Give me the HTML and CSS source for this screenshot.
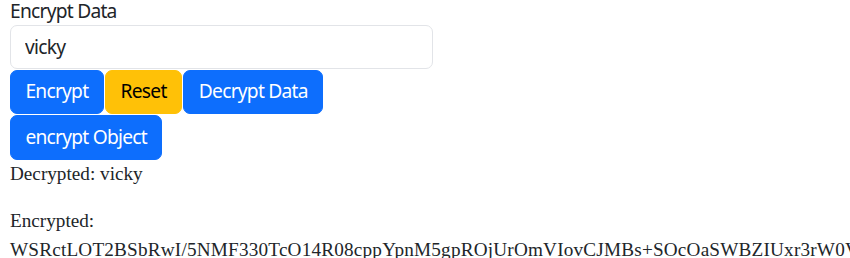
FILE: index.html
```html
<!DOCTYPE html>
<html lang="en">
<head>
<meta charset="utf-8">
<title>Encrypt Data</title>
<link rel="stylesheet" href="styles.css">
</head>
<body>
<div class="page">
  <form class="form">
    <label class="form-label" for="data">Encrypt Data</label>
    <input class="form-control" id="data" type="text" value="vicky">
    <div class="actions">
      <button type="button" class="btn btn-primary">Encrypt</button><button type="button" class="btn btn-warning">Reset</button><button type="button" class="btn btn-primary">Decrypt Data</button><button type="button" class="btn btn-primary">encrypt Object</button>
    </div>
  </form>
  <div class="result">Decrypted: vicky</div>
  <p class="result encrypted">Encrypted: <span class="cipher">WSRctLOT2BSbRwI/5NMF330TcO14R08cppYpnM5gpROjUrOmVIovCJMBs+SOcOaSWBZIUxr3rW0Vk</span></p>
</div>
</body>
</html>
```
FILE: styles.css
```css
html, body {
  margin: 0;
  padding: 0;
  overflow: hidden;
  background: #fff;
}

.page {
  padding: 0 10px;
  font-family: "Liberation Serif", "Times New Roman", serif;
  font-size: 19.2px;
  line-height: 28.8px;
  color: #212529;
}

.form {
  width: 423px;
  font-family: "Noto Sans", "Open Sans", sans-serif;
  letter-spacing: -0.75px;
}

.form-label {
  display: block;
  font-size: 19.2px;
  line-height: 22px;
  height: 24.5px;
  color: #212529;
}

.form-control {
  display: block;
  box-sizing: border-box;
  width: 423px;
  height: 44px;
  margin: 0;
  padding: 0 14px;
  font-family: inherit;
  font-size: 19.2px;
  letter-spacing: inherit;
  color: #212529;
  background: #fff;
  border: 1px solid #e2e4e8;
  border-radius: 7px;
  outline: none;
}

.actions {
  display: flex;
  flex-wrap: wrap;
  column-gap: 1.5px;
  row-gap: 1px;
  margin-top: 1px;
}

.btn {
  box-sizing: border-box;
  height: 44.5px;
  padding: 0 14.4px;
  font-family: inherit;
  font-size: 19.2px;
  letter-spacing: inherit;
  line-height: 28.8px;
  border: 1.2px solid transparent;
  border-radius: 7px;
  cursor: pointer;
}

.btn-primary {
  background: #0d6efd;
  border-color: #0d6efd;
  color: #fff;
}

.btn-warning {
  background: #ffc107;
  border-color: #ffc107;
  color: #000;
}

.result {
  margin: 0;
}

.encrypted {
  margin-top: 19.2px;
}

.cipher {
  letter-spacing: 0.2px;
}
```
